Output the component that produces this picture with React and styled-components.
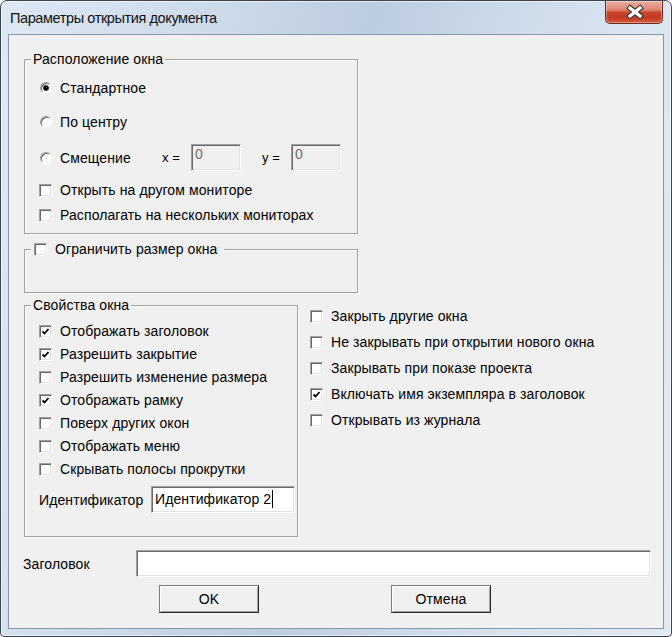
import React from 'react';
import styled, { createGlobalStyle, css } from 'styled-components';

const GlobalStyle = createGlobalStyle`
  html, body { margin: 0; padding: 0; background: #fff; }
  body { font-family: "Liberation Sans", Arial, sans-serif; color: #000; }
  * { box-sizing: border-box; }
`;

const sunken = css`
  border: 1px solid;
  border-color: #a0a0a0 #fff #fff #a0a0a0;
  box-shadow: inset 1px 1px 0 #696969, inset -1px -1px 0 #e3e3e3;
`;

const Window = styled.div`
  width: 672px;
  height: 637px;
  display: flex;
  flex-direction: column;
  border: 1px solid #3b4652;
  border-radius: 7px 7px 4px 4px;
  padding: 0 7px 7px;
  background: linear-gradient(100deg, #dde8f3 0%, #cbd9e8 30%, #bccde0 48%, #c9d7e7 62%, #d9e4f0 80%, #e2eaf4 100%);
  box-shadow: inset 0 0 0 1px rgba(255, 255, 255, 0.55);
`;

const TitleBar = styled.div`
  height: 33px;
  display: flex;
  justify-content: space-between;
  align-items: flex-start;
`;

const Title = styled.div`
  font-size: 14.5px;
  letter-spacing: -0.4px;
  line-height: 18px;
  padding: 8px 0 0 2px;
  color: #111;
`;

const CloseButton = styled.div`
  width: 58px;
  height: 23px;
  margin-right: 1px;
  border: 1px solid #6e2a1e;
  border-top: none;
  border-radius: 0 0 5px 5px;
  background: linear-gradient(#eab0a2 0%, #de8673 40%, #c8452b 52%, #c3391f 75%, #d4583d 100%);
  box-shadow: inset 0 0 0 1px rgba(255, 255, 255, 0.35);
`;

const Client = styled.div`
  flex: 1;
  border: 1px solid #8597ab;
  background: #f0f0f0;
  display: flex;
  flex-direction: column;
  font-size: 14px;
  letter-spacing: 0.1px;
`;

const Group = styled.div`
  position: relative;
  width: ${(p) => p.$w}px;
  height: ${(p) => p.$h}px;
  margin-top: ${(p) => p.$mt}px;
  margin-left: ${(p) => p.$ml ?? 15}px;
  padding: ${(p) => p.$pt ?? 0}px 0 0 14px;
  border: 1px solid #a0a0a0;
  box-shadow: inset 1px 1px 0 #fff, 1px 1px 0 #fff;
  display: flex;
  flex-direction: column;
  flex-shrink: 0;
`;

const Legend = styled.div`
  position: absolute;
  top: -9px;
  left: 6px;
  height: 16px;
  line-height: 16px;
  padding: 0 ${(p) => p.$pr ?? 2}px 0 2px;
  background: #f0f0f0;
  display: flex;
  align-items: center;
  gap: 8px;
`;

const Control = styled.div`
  display: flex;
  align-items: center;
  gap: 8px;
  height: ${(p) => p.$h ?? 18}px;
  margin-top: ${(p) => p.$mt ?? 0}px;
  margin-left: ${(p) => p.$ml ?? 0}px;
  white-space: nowrap;
`;

const Box = styled.span`
  ${sunken};
  width: 13px;
  height: 13px;
  flex-shrink: 0;
  background: #fff;
  display: flex;
  align-items: center;
  justify-content: center;
`;

const RadioSlot = styled.span`
  width: 13px;
  display: flex;
  justify-content: flex-end;
  flex-shrink: 0;
`;

const RadioCircle = styled.span`
  width: 12px;
  height: 12px;
  border-radius: 50%;
  border: 1px solid;
  border-color: #a0a0a0 #fff #fff #a0a0a0;
  box-shadow: inset 1px 1px 0 #696969;
  background: #fff;
  display: flex;
  align-items: center;
  justify-content: center;
`;

const Dot = styled.span`
  width: 4px;
  height: 4px;
  border-radius: 50%;
  background: #000;
  box-shadow: 0 0 0 1px #3a3a3a;
`;

const OffsetRow = styled.div`
  display: grid;
  grid-template-columns: 21px 102px 29px 50px 21px 29px 50px;
  align-items: center;
  height: 27px;
  margin-top: ${(p) => p.$mt}px;
`;

const SmallLabel = styled.span`
  font-size: 13px;
`;

const DisabledInput = styled.div`
  ${sunken};
  height: 27px;
  background: #f0f0f0;
  color: #6d6d6d;
  padding: 1px 3px;
  line-height: 16px;
`;

const TextInput = styled.div`
  ${sunken};
  width: ${(p) => p.$w}px;
  height: 27px;
  background: #fff;
  padding: 3px 3px;
  line-height: 18px;
  display: flex;
  align-items: flex-start;
  white-space: nowrap;
`;

const Caret = styled.span`
  display: inline-block;
  width: 1px;
  height: 18px;
  background: #000;
  margin-left: 1px;
`;

const FieldRow = styled.div`
  display: flex;
  align-items: center;
  height: 27px;
  margin-top: ${(p) => p.$mt}px;
  padding-left: ${(p) => p.$pl ?? 0}px;
`;

const FieldLabel = styled.span`
  width: ${(p) => p.$w}px;
  flex-shrink: 0;
`;

const Lower = styled.div`
  display: flex;
  align-items: flex-start;
  margin-top: 12px;
`;

const SideColumn = styled.div`
  display: flex;
  flex-direction: column;
  gap: 8px;
  margin-left: 12px;
  padding-top: 2px;
`;

const Buttons = styled.div`
  display: flex;
  gap: 132px;
  margin-top: 8px;
  padding-left: 150px;
`;

const Button = styled.div`
  width: 100px;
  height: 28px;
  display: flex;
  align-items: center;
  justify-content: center;
  border: 1px solid;
  border-color: #7a7a7a #2b2b2b #2b2b2b #7a7a7a;
  box-shadow: inset 1px 1px 0 #fff, inset -1px -1px 0 #a0a0a0;
  background: #f0f0f0;
`;

const Check = ({ checked }) => (
  <Box>
    {checked && (
      <svg width="9" height="9" viewBox="0 0 9 9">
        <polyline points="1.5,4.5 3.5,6.5 7.5,2" fill="none" stroke="#000" strokeWidth="1.8" />
      </svg>
    )}
  </Box>
);

const Radio = ({ checked }) => (
  <RadioSlot>
    <RadioCircle>{checked && <Dot />}</RadioCircle>
  </RadioSlot>
);

const CheckRow = ({ label, checked, mt }) => (
  <Control $mt={mt}>
    <Check checked={checked} />
    <span>{label}</span>
  </Control>
);

const windowProps = [
  ['Отображать заголовок', true],
  ['Разрешить закрытие', true],
  ['Разрешить изменение размера', false],
  ['Отображать рамку', true],
  ['Поверх других окон', false],
  ['Отображать меню', false],
  ['Скрывать полосы прокрутки', false],
];

const sideOptions = [
  ['Закрыть другие окна', false],
  ['Не закрывать при открытии нового окна', false],
  ['Закрывать при показе проекта', false],
  ['Включать имя экземпляра в заголовок', true],
  ['Открывать из журнала', false],
];

export default function App() {
  return (
    <>
      <GlobalStyle />
      <Window>
        <TitleBar>
          <Title>Параметры открытия документа</Title>
          <CloseButton>
            <svg width="56" height="22" viewBox="0 0 56 22">
              <g strokeLinecap="square">
                <path d="M24 7 L34 15 M34 7 L24 15" stroke="#3c3c3c" strokeWidth="5.5" />
                <path d="M24 7 L34 15 M34 7 L24 15" stroke="#fff" strokeWidth="3.2" />
              </g>
            </svg>
          </CloseButton>
        </TitleBar>
        <Client>
          <Group $w={334} $h={175} $mt={24} $pt={19}>
            <Legend>Расположение окна</Legend>
            <Control>
              <Radio checked />
              <span>Стандартное</span>
            </Control>
            <Control $mt={16}>
              <Radio />
              <span>По центру</span>
            </Control>
            <OffsetRow $mt={13}>
              <Radio />
              <span>Смещение</span>
              <SmallLabel>x =</SmallLabel>
              <DisabledInput>0</DisabledInput>
              <span />
              <SmallLabel>y =</SmallLabel>
              <DisabledInput>0</DisabledInput>
            </OffsetRow>
            <CheckRow label="Открыть на другом мониторе" mt={10} />
            <CheckRow label="Располагать на нескольких мониторах" mt={7} />
          </Group>

          <Group $w={334} $h={44} $mt={15}>
            <Legend $pr={7}>
              <Control $ml={1}>
                <Check />
                <span>Ограничить размер окна</span>
              </Control>
            </Legend>
          </Group>

          <Lower>
            <Group $w={274} $h={232} $mt={0} $pt={16}>
              <Legend>Свойства окна</Legend>
              {windowProps.map(([label, checked], i) => (
                <CheckRow key={label} label={label} checked={checked} mt={i ? 5 : 0} />
              ))}
              <FieldRow $mt={8}>
                <FieldLabel $w={112}>Идентификатор</FieldLabel>
                <TextInput $w={144}>
                  Идентификатор 2<Caret />
                </TextInput>
              </FieldRow>
            </Group>
            <SideColumn>
              {sideOptions.map(([label, checked]) => (
                <CheckRow key={label} label={label} checked={checked} />
              ))}
            </SideColumn>
          </Lower>

          <FieldRow $mt={13} $pl={14}>
            <FieldLabel $w={113}>Заголовок</FieldLabel>
            <TextInput $w={515} />
          </FieldRow>

          <Buttons>
            <Button>OK</Button>
            <Button>Отмена</Button>
          </Buttons>
        </Client>
      </Window>
    </>
  );
}
